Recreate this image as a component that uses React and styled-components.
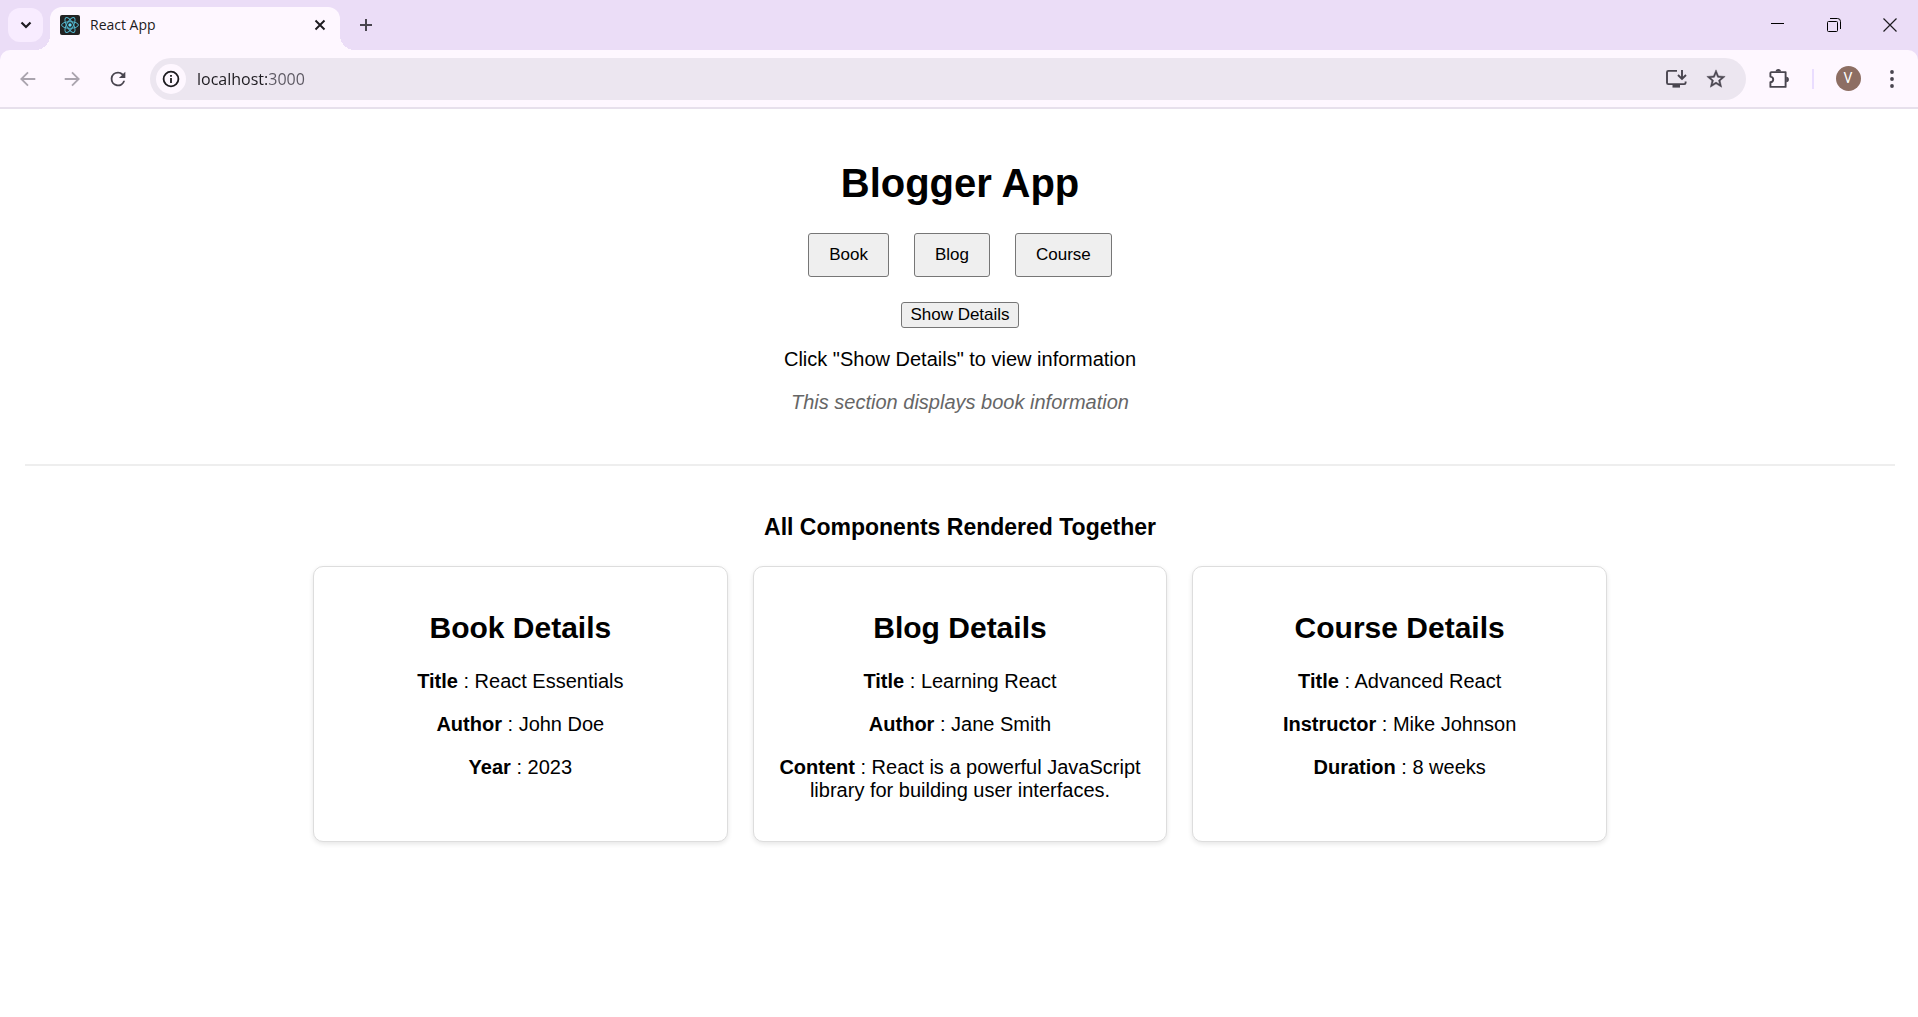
import React from "react";
import styled, { createGlobalStyle } from "styled-components";

const GlobalStyle = createGlobalStyle`
  * { box-sizing: border-box; }
  body {
    margin: 0;
    background: #ffffff;
    color: #000000;
    font-family: "Liberation Sans", Arial, sans-serif;
    font-size: 20px;
    line-height: 23px;
  }
`;

const chromeFont = `"Open Sans", "Noto Sans", sans-serif`;

/* ---------- browser frame ---------- */

const TabStrip = styled.div`
  display: flex;
  align-items: center;
  height: 50px;
  padding-left: 8px;
  background: #ebddf7;
`;

const IconButton = styled.button`
  display: flex;
  flex: none;
  align-items: center;
  justify-content: center;
  width: ${(p) => p.$width || 34}px;
  height: ${(p) => p.$height || 34}px;
  padding: 0;
  border: 0;
  border-radius: ${(p) => p.$radius || 0}px;
  background: ${(p) => p.$bg || "transparent"};
  color: ${(p) => p.$color || "#49454f"};
`;

const Tab = styled.div`
  position: relative;
  display: flex;
  align-items: center;
  align-self: flex-end;
  width: 290px;
  height: 43px;
  margin-left: 7px;
  padding: 0 8px 7px 10px;
  border-radius: 12px 12px 0 0;
  background: #fef7ff;

  &::before,
  &::after {
    content: "";
    position: absolute;
    bottom: 0;
    width: 15px;
    height: 15px;
  }
  &::before {
    right: 100%;
    background: radial-gradient(circle at 0 0, transparent 15px, #fef7ff 15px);
  }
  &::after {
    left: 100%;
    background: radial-gradient(circle at 100% 0, transparent 15px, #fef7ff 15px);
  }
`;

const TabTitle = styled.span`
  flex: 1;
  margin-left: 10px;
  color: #1d1b20;
  font-family: ${chromeFont};
  font-size: 14px;
  line-height: 20px;
`;

const WindowControls = styled.div`
  display: flex;
  margin-left: auto;
`;

const ToolbarBacking = styled.div`
  background: #ebddf7;
`;

const Toolbar = styled.div`
  display: flex;
  align-items: center;
  height: 59px;
  padding: 0 6px;
  border-bottom: 2px solid #e7e0ec;
  border-radius: 10px 10px 0 0;
  background: #fef7ff;
`;

const NavButtons = styled.div`
  display: flex;
  width: 144px;
`;

const AddressBar = styled.div`
  display: flex;
  flex: 1;
  align-items: center;
  height: 42px;
  padding: 0 10px 0 6px;
  border-radius: 21px;
  background: #ece6f0;
`;

/* The host is dark and the port lighter: the split sits after "localhost". */
const AddressInput = styled.input`
  flex: 1;
  min-width: 0;
  margin: 0 8px 0 11px;
  padding: 0;
  border: 0;
  outline: 0;
  background: linear-gradient(90deg, #1d1b20 70px, #5b5761 70px);
  background-clip: text;
  -webkit-background-clip: text;
  -webkit-text-fill-color: transparent;
  color: #1d1b20;
  font-family: ${chromeFont};
  font-size: 16px;
  line-height: 24px;
`;

const ToolbarDivider = styled.span`
  width: 2px;
  height: 20px;
  margin-right: 10px;
  background: #eaddff;
`;

const Avatar = styled.span`
  width: 25px;
  height: 25px;
  border-radius: 50%;
  background: #8d6e63;
  color: #ffffff;
  font-family: Roboto, sans-serif;
  font-size: 14px;
  line-height: 25px;
  text-align: center;
`;

/* ---------- page ---------- */

const Page = styled.main`
  padding: 25px 23px 25px 25px;
  text-align: center;
`;

const Title = styled.h1`
  margin: 26px 0 27px;
  font-size: 40px;
  line-height: 46px;
`;

const ButtonRow = styled.div`
  display: flex;
  justify-content: center;
  gap: 25px;
  margin-bottom: 25px;
`;

const Button = styled.button`
  height: ${(p) => (p.$large ? 44 : 26)}px;
  padding: 0 ${(p) => (p.$large ? 20 : 8)}px;
  border: 1px solid #767676;
  border-radius: 3px;
  background: #efefef;
  color: #000000;
  font-family: inherit;
  font-size: 17px;
  line-height: 20px;
`;

const Text = styled.p`
  margin: 20px 0;
`;

const Note = styled(Text)`
  color: #666666;
  font-style: italic;
`;

const Divider = styled.hr`
  height: 2px;
  margin: 50px 0 48px;
  border: 0;
  background: #eeeeee;
`;

const SectionTitle = styled.h2`
  margin: 0 0 25px;
  font-size: 23px;
  line-height: 27px;
`;

const Cards = styled.div`
  display: grid;
  grid-template-columns: repeat(3, 1fr);
  gap: 25px;
  max-width: 1294px;
  margin: 0 auto;
`;

const Card = styled.section`
  padding: 19px;
  border: 1px solid #dddddd;
  border-radius: 10px;
  background: #ffffff;
  box-shadow: 0 2px 5px rgba(0, 0, 0, 0.1);
`;

const CardTitle = styled.h3`
  margin: 25px 0;
  font-size: 30px;
  line-height: 34px;
`;

/* ---------- icons ---------- */

const Svg = ({ size = 22, box = 24, children }) => (
  <svg width={size} height={size} viewBox={`0 0 ${box} ${box}`} fill="none" stroke="currentColor" aria-hidden="true">
    {children}
  </svg>
);

const ReactFavicon = () => (
  <Svg size={20} box={20}>
    <rect width="20" height="20" rx="2" fill="#222222" stroke="none" />
    <g stroke="#52b5cc" strokeWidth="1">
      <ellipse cx="10" cy="10" rx="8.4" ry="3.3" />
      <ellipse cx="10" cy="10" rx="8.4" ry="3.3" transform="rotate(60 10 10)" />
      <ellipse cx="10" cy="10" rx="8.4" ry="3.3" transform="rotate(120 10 10)" />
    </g>
    <circle cx="10" cy="10" r="1.7" fill="#61dafb" stroke="none" />
  </Svg>
);

const BackIcon = () => (
  <Svg size={16} box={16}>
    <path d="M15.3 8H1.8M8 1.3 1.3 8 8 14.7" strokeWidth="1.8" />
  </Svg>
);

const ForwardIcon = () => (
  <Svg size={16} box={16}>
    <path d="M.7 8h13.5M8 1.3 14.7 8 8 14.7" strokeWidth="1.8" />
  </Svg>
);

const ReloadIcon = () => (
  <Svg>
    <path
      d="M17.65 6.35A7.96 7.96 0 0 0 12 4a8 8 0 1 0 7.73 10h-2.08A6 6 0 1 1 12 6c1.66 0 3.14.69 4.22 1.78L13 11h7V4z"
      fill="currentColor"
      stroke="none"
    />
  </Svg>
);

const InfoIcon = () => (
  <Svg size={18} box={18}>
    <circle cx="9" cy="9" r="7.4" strokeWidth="1.8" />
    <path d="M9 8v5M9 5v1.8" strokeWidth="1.8" />
  </Svg>
);

const InstallIcon = () => (
  <Svg size={22} box={22}>
    <path d="M12 2.9H3.4a1.4 1.4 0 0 0-1.4 1.4v10.4a1.4 1.4 0 0 0 1.4 1.4h15.8a1.4 1.4 0 0 0 1.400-1.400V13.500" strokeWidth="1.9" />
    <path d="M7.500 16h7.500v3.600H7.500z" fill="currentColor" stroke="none" />
    <path d="M17 2v8.600M13 7l4 4 4-4" strokeWidth="1.9" />
  </Svg>
);

const StarIcon = () => (
  <Svg size={22}>
    <path
      d="M22 9.24l-7.19-.62L12 2 9.19 8.63 2 9.24l5.46 4.73L5.82 21 12 17.27 18.18 21l-1.63-7.03L22 9.24zM12 15.4l-3.76 2.27 1-4.28-3.32-2.88 4.38-.38L12 6.1l1.71 4.04 4.38.38-3.32 2.88 1 4.28L12 15.4z"
      fill="currentColor"
      strokeWidth=".5"
    />
  </Svg>
);

const PuzzleIcon = () => (
  <Svg size={22} box={22}>
    <path
      d="M3.4 4.100h14.200v14.800H2.400v-4.600c1.900-.300 2.800-1.400 2.800-2.900S4.300 8.900 2.400 8.600V5.100a1 1 0 0 1 1-1z"
      strokeWidth="1.9"
      strokeLinejoin="round"
    />
    <path d="M7.600 3.600a2.700 2.700 0 0 1 5.400 0zM18.200 8.800a2.700 2.700 0 0 1 0 5.400z" fill="currentColor" stroke="none" />
  </Svg>
);

const MenuIcon = () => (
  <Svg size={20} box={20}>
    <g fill="currentColor" stroke="none">
      <circle cx="10" cy="3" r="1.9" />
      <circle cx="10" cy="10" r="1.9" />
      <circle cx="10" cy="17" r="1.9" />
    </g>
  </Svg>
);

const ChevronIcon = () => (
  <Svg size={12} box={12}>
    <path d="M1.500 3.500 6 8l4.500-4.500" strokeWidth="2.2" />
  </Svg>
);

const CloseTabIcon = () => (
  <Svg size={12} box={12}>
    <path d="M1.500 1.500l9 9M10.500 1.500l-9 9" strokeWidth="1.9" />
  </Svg>
);

const PlusIcon = () => (
  <Svg size={14} box={14}>
    <path d="M7 1v12M1 7h12" strokeWidth="2" />
  </Svg>
);

const MinimizeIcon = () => (
  <Svg size={14} box={14}>
    <path d="M0 5.500h13" />
  </Svg>
);

const RestoreIcon = () => (
  <Svg size={14} box={14}>
    <rect x=".5" y="3.500" width="10" height="10" rx="1" />
    <path d="M3 .5h7.500a3 3 0 0 1 3 3v7.500" />
  </Svg>
);

const CloseWindowIcon = () => (
  <Svg size={14} box={14}>
    <path d="M.5.5l13 13M13.500.5l-13 13" strokeWidth="1.2" />
  </Svg>
);

/* ---------- content ---------- */

const sections = ["Book", "Blog", "Course"];

const cards = [
  {
    title: "Book Details",
    rows: [
      ["Title", "React Essentials"],
      ["Author", "John Doe"],
      ["Year", "2023"],
    ],
  },
  {
    title: "Blog Details",
    rows: [
      ["Title", "Learning React"],
      ["Author", "Jane Smith"],
      ["Content", "React is a powerful JavaScript library for building user interfaces."],
    ],
  },
  {
    title: "Course Details",
    rows: [
      ["Title", "Advanced React"],
      ["Instructor", "Mike Johnson"],
      ["Duration", "8 weeks"],
    ],
  },
];

function BrowserFrame() {
  return (
    <header>
      <TabStrip>
        <IconButton $width={35} $radius={12} $bg="#f8ecff" $color="#1d1b20" aria-label="Search tabs">
          <ChevronIcon />
        </IconButton>
        <Tab>
          <ReactFavicon />
          <TabTitle>React App</TabTitle>
          <IconButton $width={24} $height={24} $color="#1d1b20" aria-label="Close tab">
            <CloseTabIcon />
          </IconButton>
        </Tab>
        <IconButton $width={52} aria-label="New tab">
          <PlusIcon />
        </IconButton>
        <WindowControls>
          <IconButton $width={56} $height={50} $color="#000000" aria-label="Minimize">
            <MinimizeIcon />
          </IconButton>
          <IconButton $width={56} $height={50} $color="#000000" aria-label="Restore">
            <RestoreIcon />
          </IconButton>
          <IconButton $width={56} $height={50} $color="#1d1b20" aria-label="Close window">
            <CloseWindowIcon />
          </IconButton>
        </WindowControls>
      </TabStrip>
      <ToolbarBacking>
        <Toolbar>
          <NavButtons>
            <IconButton $width={44} $color="#aaa4ae" aria-label="Back">
              <BackIcon />
            </IconButton>
            <IconButton $width={44} $color="#aaa4ae" aria-label="Forward">
              <ForwardIcon />
            </IconButton>
            <IconButton $width={48} aria-label="Reload">
              <ReloadIcon />
            </IconButton>
          </NavButtons>
          <AddressBar>
            <IconButton $width={30} $height={30} $radius={15} $bg="#fef7ff" $color="#1d1b20" aria-label="Site information">
              <InfoIcon />
            </IconButton>
            <AddressInput type="text" aria-label="Address" defaultValue="localhost:3000" />
            <IconButton $width={40} aria-label="Install app">
              <InstallIcon />
            </IconButton>
            <IconButton $width={40} aria-label="Bookmark this page">
              <StarIcon />
            </IconButton>
          </AddressBar>
          <IconButton $width={66} aria-label="Extensions">
            <PuzzleIcon />
          </IconButton>
          <ToolbarDivider />
          <IconButton $width={48} aria-label="Profile">
            <Avatar>V</Avatar>
          </IconButton>
          <IconButton $width={40} aria-label="Menu">
            <MenuIcon />
          </IconButton>
        </Toolbar>
      </ToolbarBacking>
    </header>
  );
}

export default function App() {
  return (
    <>
      <GlobalStyle />
      <BrowserFrame />
      <Page>
        <Title>Blogger App</Title>
        <ButtonRow>
          {sections.map((name) => (
            <Button key={name} $large>
              {name}
            </Button>
          ))}
        </ButtonRow>
        <Button>Show Details</Button>
        <Text>Click "Show Details" to view information</Text>
        <Note>This section displays book information</Note>
        <Divider />
        <SectionTitle>All Components Rendered Together</SectionTitle>
        <Cards>
          {cards.map((card) => (
            <Card key={card.title}>
              <CardTitle>{card.title}</CardTitle>
              {card.rows.map(([label, value]) => (
                <Text key={label}>
                  <strong>{label}</strong> : {value}
                </Text>
              ))}
            </Card>
          ))}
        </Cards>
      </Page>
    </>
  );
}
